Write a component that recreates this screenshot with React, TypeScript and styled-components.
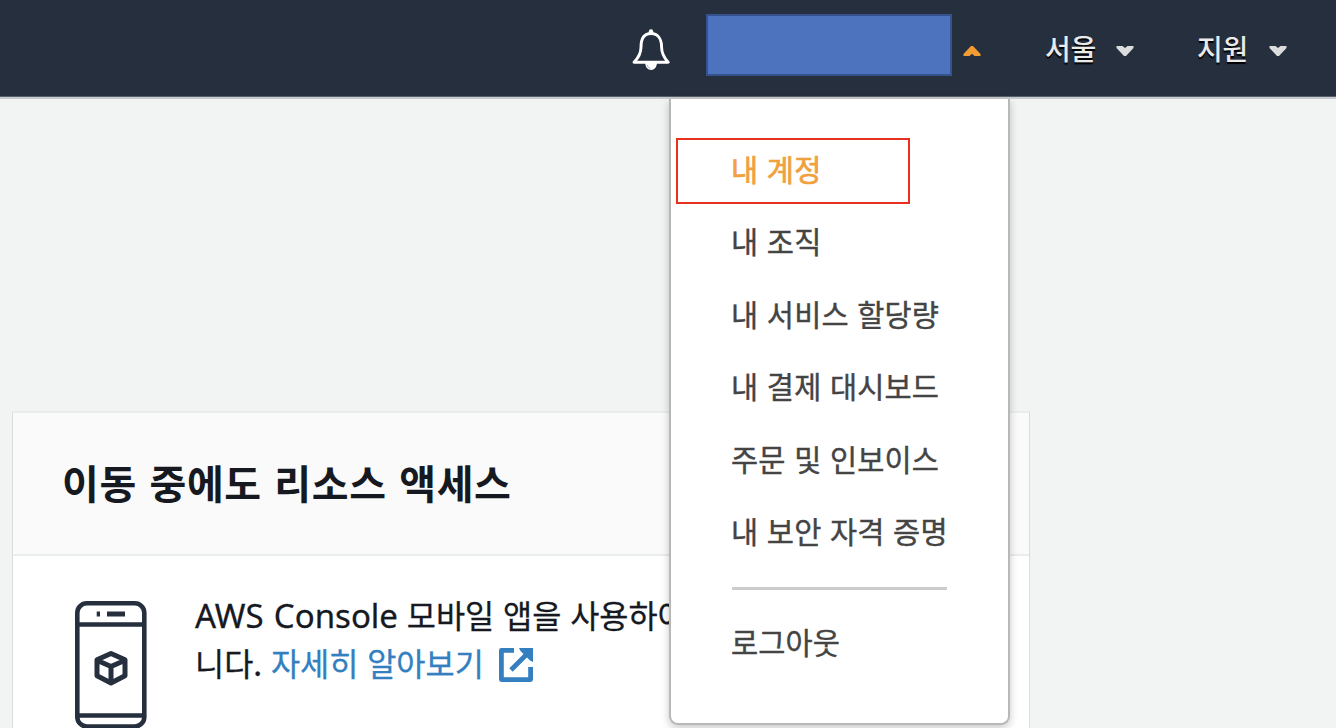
import styled, { createGlobalStyle, css } from "styled-components";

const GlobalStyle = createGlobalStyle`
  * {
    box-sizing: border-box;
  }
  body {
    margin: 0;
    background-color: #f2f3f3;
    font-family: "Noto Sans CJK KR", "Noto Sans", sans-serif;
    overflow: hidden;
  }
`;

const Page = styled.div`
  width: 1336px;
  height: 728px;
  overflow: hidden;
`;

const Nav = styled.nav`
  height: 99px;
  padding: 0 49px 0 0;
  display: flex;
  justify-content: flex-end;
  align-items: flex-start;
  background-color: #262f3e;
  border-bottom: 2px solid #c9cacb;
  box-shadow: inset 0 -1px 0 #56606c;
`;

const BellButton = styled.div`
  width: 38px;
  height: 42px;
  margin: 29px 36px 0 0;
`;

const Account = styled.div`
  position: relative;
  width: 276px;
  height: 97px;
  margin-right: 63px;
  display: flex;
  align-items: flex-start;
`;

const AccountName = styled.div`
  width: 246px;
  height: 62px;
  margin: 14px 11px 0 0;
  background-color: #4d73be;
  border: 2px solid #35528f;
`;

const NavItem = styled.div<{ $last?: boolean }>`
  display: flex;
  align-items: flex-start;
  width: ${(props) => (props.$last ? 90 : 89)}px;
  margin-right: ${(props) => (props.$last ? 0 : 63)}px;
  justify-content: space-between;
`;

const NavLabel = styled.span`
  margin-top: 28px;
  font-size: 28px;
  line-height: 40px;
  font-weight: 500;
  letter-spacing: -0.3px;
  color: #eaeaea;
  text-shadow: 0 2px 1px #000;
`;

const CaretSvg = styled.svg`
  display: block;
  flex: none;
  width: 18px;
  height: 11px;
  margin-top: 45px;
`;

const Menu = styled.div`
  position: absolute;
  z-index: 2;
  top: 99px;
  left: -37px;
  width: 341px;
  height: 626px;
  padding: 39px 5px 0;
  background-color: #fff;
  border: 2px solid #b8b8b8;
  border-top: 0;
  border-radius: 0 0 9px 9px;
  box-shadow: 0 3px 8px rgba(0, 0, 0, 0.22);
`;

const MenuItem = styled.div<{ $active?: boolean }>`
  width: 234px;
  height: 72.4px;
  padding-left: 55px;
  font-size: 29.5px;
  line-height: 60px;
  letter-spacing: 0.15px;
  word-spacing: 1.8px;
  white-space: nowrap;
  color: #444;
  -webkit-text-stroke: 0.4px currentColor;
  ${(props) =>
    props.$active &&
    css`
      height: 66px;
      margin-bottom: 6.4px;
      padding-left: 53px;
      line-height: 56px;
      color: #f0a03c;
      border: 2px solid #e8301f;
      -webkit-text-stroke-width: 0.7px;
    `}
`;

const Divider = styled.div`
  width: 215px;
  height: 3px;
  margin: 15px 0 21px 56px;
  background-color: #ccc;
`;

const Card = styled.section`
  width: 1018px;
  height: 340px;
  margin: 312px 0 0 12px;
  background-color: #fff;
  border: 1px solid #d9dddd;
  border-top: 2px solid #eaeded;
`;

const CardHeader = styled.header`
  height: 143px;
  padding: 0 49px;
  background-color: #fafafa;
  border-bottom: 2px solid #eaeded;
`;

const Title = styled.h2`
  margin: 0;
  font-size: 40px;
  line-height: 138px;
  font-weight: 700;
  letter-spacing: 0.6px;
  word-spacing: 3px;
  color: #16191f;
`;

const CardBody = styled.div`
  display: flex;
  padding: 45px 0 0 62px;
`;

const PhoneSvg = styled.svg`
  flex: none;
  width: 72px;
  height: 128px;
  margin-right: 48px;
`;

const Description = styled.p`
  margin: -11px 0 0;
  font-size: 31.7px;
  line-height: 48px;
  word-spacing: 1.7px;
  white-space: nowrap;
  color: #16191f;
  -webkit-text-stroke: 0.3px currentColor;
`;

const Latin = styled.span`
  font-family: "Noto Sans", sans-serif;
  font-size: 33px;
  line-height: 1;
`;

const Link = styled.a`
  color: #337fbf;
`;

const ExternalSvg = styled.svg`
  width: 34px;
  height: 34px;
  margin-left: 15px;
  vertical-align: -6px;
`;

const Caret = ({ up }: { up?: boolean }) => (
  <CaretSvg viewBox="0 0 18 11">
    {up ? (
      <path d="M0.500 11V9L8 1h2l7.500 8v2H11.500L9 8.800 6.500 11z" fill="#f29c33" />
    ) : (
      <path d="M0.500 1h6L9 3l2.500-2h6v2L10 11H8L0.500 3z" fill="#dcdcdc" />
    )}
  </CaretSvg>
);

const Bell = () => (
  <svg width="38" height="42" viewBox="0 0 38 42" fill="none">
    <path
      d="M2 33.200c4.500-4.500 7-9 7-15C9 9.500 12.500 4.500 19 4.500S29.600 9.500 29.600 18.200c0 6 2.400 10.500 6.600 15z"
      stroke="#fff"
      strokeWidth="2.900"
      strokeLinejoin="round"
    />
    <path d="M16.800 4V2.500a2.200 2.200 0 0 1 4.400 0V4z" fill="#fff" />
    <path d="M13.300 34h11.600c0 4-2.500 7-5.800 7s-5.800-3-5.800-7z" fill="#fff" />
    <path d="M15.300 36.200c.6 1.800 1.600 2.800 3 3.300" stroke="#8b919a" strokeWidth="0.800" />
  </svg>
);

const Phone = () => (
  <PhoneSvg viewBox="0 0 72 128" fill="none" stroke="#262f3e">
    <rect x="2.300" y="2.300" width="67" height="123.200" rx="9.500" strokeWidth="4.600" />
    <path d="M2 23.500h68M2 114.500h68" strokeWidth="4.600" />
    <path d="M21.700 13H25M32 13h18" strokeWidth="4.800" />
    <path
      d="M36 52.500l14 6.200v16L36 82l-14-7.300v-16zM22.500 59.500L36 65.500l13.500-6M36 65.500V81"
      strokeWidth="5"
      strokeLinejoin="round"
    />
  </PhoneSvg>
);

const ExternalIcon = () => (
  <ExternalSvg viewBox="0 0 34 34" fill="none" stroke="#337fbf">
    <path d="M15 2.400H2.400v29.200h29.200V19" strokeWidth="4.800" strokeLinejoin="round" />
    <path d="M12 22L29 5" strokeWidth="4.800" />
    <path d="M20 0h14v14l-3-1.500L21.500 3z" fill="#337fbf" stroke="none" />
  </ExternalSvg>
);

const menuItems = [
  "내 계정",
  "내 조직",
  "내 서비스 할당량",
  "내 결제 대시보드",
  "주문 및 인보이스",
  "내 보안 자격 증명",
];

function App() {
  return (
    <Page>
      <GlobalStyle />
      <Nav>
        <BellButton>
          <Bell />
        </BellButton>
        <Account>
          <AccountName />
          <Caret up />
          <Menu>
            {menuItems.map((item, index) => (
              <MenuItem key={item} $active={index === 0}>
                {item}
              </MenuItem>
            ))}
            <Divider />
            <MenuItem>로그아웃</MenuItem>
          </Menu>
        </Account>
        <NavItem>
          <NavLabel>서울</NavLabel>
          <Caret />
        </NavItem>
        <NavItem $last>
          <NavLabel>지원</NavLabel>
          <Caret />
        </NavItem>
      </Nav>
      <Card>
        <CardHeader>
          <Title>이동 중에도 리소스 액세스</Title>
        </CardHeader>
        <CardBody>
          <Phone />
          <Description>
            <Latin>AWS Console</Latin> 모바일 앱을 사용하여
            <br />
            니다. <Link>자세히 알아보기</Link>
            <ExternalIcon />
          </Description>
        </CardBody>
      </Card>
    </Page>
  );
}

export default App;
